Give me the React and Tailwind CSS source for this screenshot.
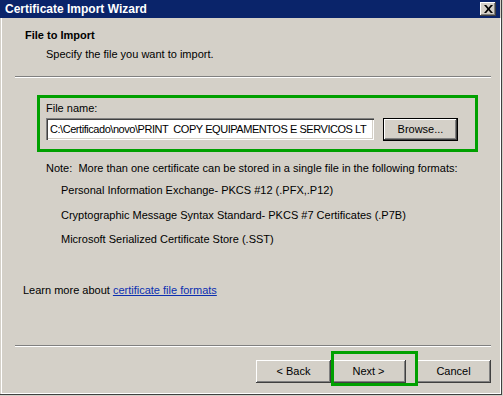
import React from "react";

const raised =
  "shadow-[inset_-1px_-1px_0_#404040,inset_1px_1px_0_#ffffff,inset_-2px_-2px_0_#808080,inset_2px_2px_0_#d4d0c8]";

function Btn({ children, className = "" }) {
  return (
    <div
      className={`flex items-center justify-center bg-[#d4d0c8] text-black ${raised} ${className}`}
    >
      {children}
    </div>
  );
}

export default function App() {
  return (
    <div className="w-[503px] h-[396px] bg-[#d4d0c8] overflow-hidden font-['Liberation_Sans',Arial,sans-serif] text-[11px] leading-[13px] text-black">
      <div className="relative w-[502px] h-[395px] flex flex-col border-r border-b border-[#404040]">
        {/* title bar */}
        <div className="h-[18px] shrink-0 bg-[#0a246a] flex items-center justify-between pl-[5px] pr-[4px] mr-[1px]">
          <span className="text-white font-bold text-[12px] leading-[13px]">
            Certificate Import Wizard
          </span>
          <div className={`w-[16px] h-[14px] flex items-center justify-center bg-[#d4d0c8] ${raised}`}>
            <svg width="9" height="8" viewBox="0 0 9 8">
              <path d="M0 0h2.2l2.3 2.7L6.8 0H9L5.6 4 9 8H6.8L4.5 5.3 2.2 8H0l3.4-4z" fill="#000" />
            </svg>
          </div>
        </div>
        {/* body */}
        <div className="flex-1 flex flex-col border-l border-white border-r border-[#808080] border-b ml-[1px] mr-0">
          <div className="pl-[23px] mt-[11px] font-bold">File to Import</div>
          <div className="pl-[44px] mt-[6px]">Specify the file you want to import.</div>
          <div className="ml-[13px] w-[476px] h-[2px] mt-[15px] border-t border-[#808080] border-b border-b-white" />

          <div className="ml-[35px] mt-[17px] w-[441px] h-[57px] border-[3px] border-[#00a000] pl-[6px] pt-[4px]">
            <div>File name:</div>
            <div className="flex mt-[3px] gap-[9px]">
              <div className="w-[328px] h-[22px] bg-white flex items-center pl-[4px] whitespace-pre overflow-hidden tracking-[-0.45px] shadow-[inset_1px_1px_0_#808080,inset_2px_2px_0_#404040,inset_-1px_-1px_0_#ffffff,inset_-2px_-2px_0_#d4d0c8]">
                C:\Certificado\novo\PRINT  COPY EQUIPAMENTOS E SERVICOS LT
              </div>
              <div className="w-[75px] h-[23px] border border-black">
                <Btn className="w-full h-full">Browse...</Btn>
              </div>
            </div>
          </div>

          <div className="pl-[44px] mt-[10px]">
            Note:&nbsp; More than one certificate can be stored in a single file in the following formats:
          </div>
          <div className="pl-[59px] mt-[9px]">Personal Information Exchange- PKCS #12 (.PFX,.P12)</div>
          <div className="pl-[59px] mt-[12px]">Cryptographic Message Syntax Standard- PKCS #7 Certificates (.P7B)</div>
          <div className="pl-[59px] mt-[11px]">Microsoft Serialized Certificate Store (.SST)</div>

          <div className="pl-[21px] mt-[38px]">
            Learn more about{" "}
            <span className="text-[#0b2fb0] underline">certificate file formats</span>
          </div>

          <div className="ml-[13px] w-[476px] h-[2px] mt-[48px] border-t border-[#808080] border-b border-b-white" />

          <div className="flex mt-[13px] ml-[254px]">
            <Btn className="w-[75px] h-[23px]">&lt; Back</Btn>
            <Btn className="w-[75px] h-[23px]">Next &gt;</Btn>
            <Btn className="w-[75px] h-[23px] ml-[10px]">Cancel</Btn>
          </div>
        </div>
        {/* highlight around Next */}
        <div className="absolute left-[331px] top-[351px] w-[87px] h-[35px] border-[3px] border-[#00a000]" />
      </div>
    </div>
  );
}
